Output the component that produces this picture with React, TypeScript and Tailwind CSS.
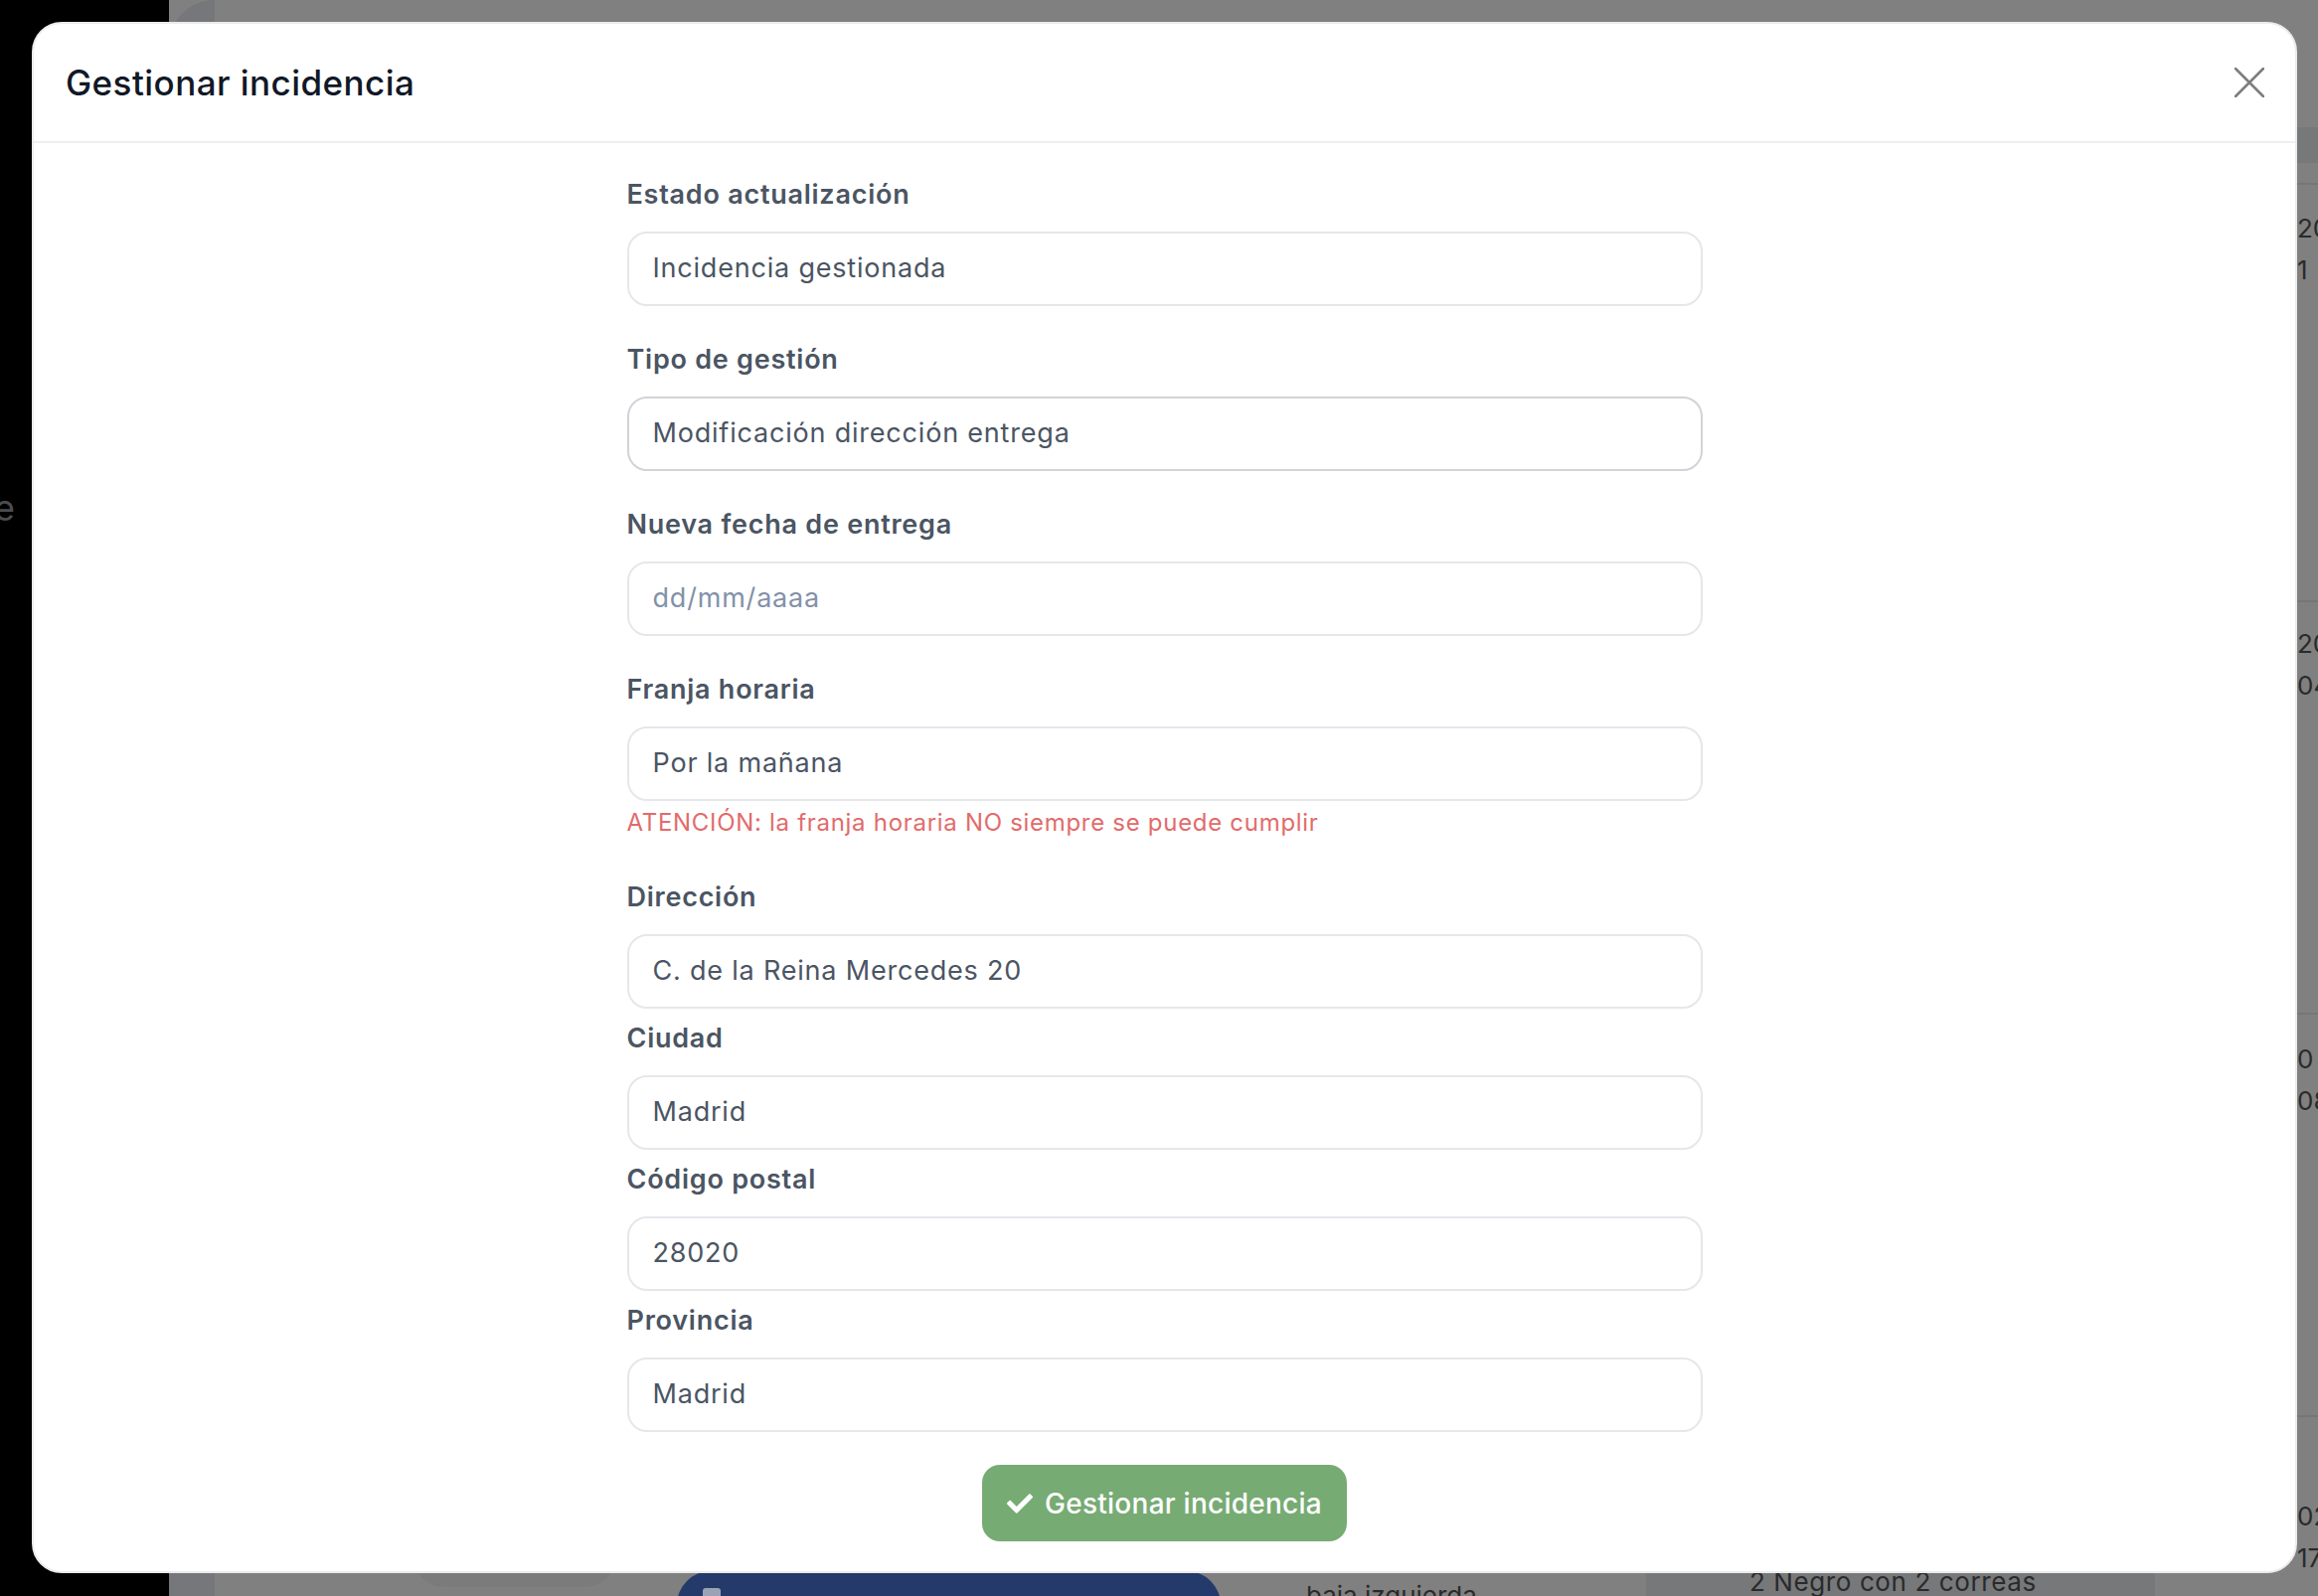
import { FaCheck } from "react-icons/fa";

type FieldProps = {
  label: string;
  value?: string;
  placeholder?: string;
  strong?: boolean;
  tight?: boolean;
  children?: React.ReactNode;
};

function Field({ label, value, placeholder, strong, tight, children }: FieldProps) {
  return (
    <div className={tight ? "mb-[12px]" : "mb-[36px]"}>
      <label className="mb-[19px] block h-[36px] text-[27px] font-semibold leading-[36px] tracking-[0.75px] text-[#4b5563]">
        {label}
      </label>
      <div
        className={
          strong
            ? "flex h-[75px] items-center rounded-[20px] border-2 border-[#d1d3d8] px-[24px] text-[27px] tracking-[0.8px] text-[#4b5563]"
            : "flex h-[75px] items-center rounded-[20px] border-2 border-[#e5e7eb] px-[24px] text-[27px] tracking-[0.8px] text-[#4b5563]"
        }
      >
        {value ? value : <span className="text-[#8391a9]">{placeholder}</span>}
      </div>
      {children}
    </div>
  );
}

function CloseIcon() {
  return (
    <svg width="30" height="30" viewBox="0 0 30 30" fill="none">
      <path d="M1 1L29 29M29 1L1 29" stroke="#7d7d7d" strokeWidth="2.6" strokeLinecap="round" />
    </svg>
  );
}

function TableRow({ top, lines, height }: { top: string; lines: string[]; height: string }) {
  return (
    <div className={`flex shrink-0 justify-end border-t-2 border-[#767676] ${height}`}>
      <div className={`w-[21px] whitespace-nowrap text-[26px] leading-[42px] text-[#2a2a2a] ${top}`}>
        {lines.map((l) => (
          <div key={l}>{l}</div>
        ))}
      </div>
    </div>
  );
}

function Background() {
  return (
    <main className="flex min-w-0 flex-1 flex-col overflow-hidden">
      <div className="h-[128px] shrink-0" />
      <div className="h-[36px] shrink-0 bg-[#77787a]" />
      <div className="h-[20px] shrink-0" />
      <TableRow height="h-[420px]" top="pt-[23px]" lines={["20", "1"]} />
      <TableRow height="h-[415px]" top="pt-[21px]" lines={["20", "04"]} />
      <TableRow height="h-[405px]" top="pt-[24px]" lines={["0", "08"]} />
      <div className="flex min-h-0 flex-1 items-start border-t-2 border-[#767676]">
        <div className="w-[201px] shrink-0" />
        <div className="h-[171px] w-[201px] shrink-0 rounded-b-[28px] bg-[#7b7b7c]" />
        <div className="w-[63px] shrink-0" />
        <div className="mt-[155px] h-[60px] w-[547px] shrink-0 rounded-t-[34px] bg-[#243a6b] pl-[26px] pt-[17px]">
          <div className="h-[10px] w-[18px] rounded-t-[3px] bg-[#9aa3b5]" />
        </div>
        <div className="w-[86px] shrink-0" />
        <div className="mt-[164px] w-[342px] shrink-0 whitespace-nowrap text-[26px] leading-[32px] text-[#2a2a2a]">
          baja izquierda
        </div>
        <div className="w-[512px] shrink-0 self-stretch whitespace-nowrap bg-[#77787a] pl-[104px] pt-[150px] text-[26px] leading-[32px] tracking-[0.6px] text-[#2a2a2a]">
          2 Negro con 2 correas
        </div>
        <div className="min-w-0 flex-1 whitespace-nowrap pl-[143px] pt-[79px] text-[26px] leading-[42px] text-[#2a2a2a]">
          <div>02</div>
          <div>17</div>
        </div>
      </div>
    </main>
  );
}

function Modal() {
  return (
    <div className="absolute left-[32px] top-[22px] flex h-[1561px] w-[2279px] flex-col rounded-[30px] border-2 border-[#ebebeb] bg-white">
      <header className="flex h-[120px] shrink-0 items-center justify-between border-b-2 border-[#efefef] pl-[32px] pr-[31px]">
        <h2 className="text-[35px] font-medium tracking-[0.45px] text-[#111827]">Gestionar incidencia</h2>
        <button className="flex h-[30px] w-[30px] items-center justify-center">
          <CloseIcon />
        </button>
      </header>
      <div className="flex flex-1 flex-col items-center pt-[34px]">
        <form className="w-[1082px]">
          <Field label="Estado actualización" value="Incidencia gestionada" />
          <Field label="Tipo de gestión" value="Modificación dirección entrega" strong />
          <Field label="Nueva fecha de entrega" placeholder="dd/mm/aaaa" />
          <div className="mb-[41px]">
            <label className="mb-[19px] block h-[36px] text-[27px] font-semibold leading-[36px] tracking-[0.75px] text-[#4b5563]">
              Franja horaria
            </label>
            <div className="flex h-[75px] items-center rounded-[20px] border-2 border-[#e5e7eb] px-[24px] text-[27px] tracking-[0.8px] text-[#4b5563]">
              Por la mañana
            </div>
            <p className="mt-[6px] text-[24px] leading-[32px] tracking-[0.7px] text-[#e26b6b]">
              ATENCIÓN: la franja horaria NO siempre se puede cumplir
            </p>
          </div>
          <Field label="Dirección" value="C. de la Reina Mercedes 20" tight />
          <Field label="Ciudad" value="Madrid" tight />
          <Field label="Código postal" value="28020" tight />
          <Field label="Provincia" value="Madrid" tight />
        </form>
        <button className="mt-[21px] flex h-[77px] w-[367px] items-center justify-center gap-[12px] rounded-[18px] bg-[#77ab74] text-[28px] font-medium tracking-[0.25px] text-white">
          <FaCheck size={26} />
          Gestionar incidencia
        </button>
      </div>
    </div>
  );
}

export default function App() {
  return (
    <div className="relative flex h-[1606px] w-[2332px] overflow-hidden bg-[#808080] font-['Inter','Liberation_Sans',sans-serif]">
      <aside className="w-[170px] shrink-0 bg-black pt-[489px] text-[36px] leading-[44px] text-[#4d4d50]">
        <span className="-ml-[6px] block">e</span>
      </aside>
      <div className="w-[46px] shrink-0 rounded-tl-[46px] bg-[#76777a]" />
      <Background />
      <Modal />
    </div>
  );
}
